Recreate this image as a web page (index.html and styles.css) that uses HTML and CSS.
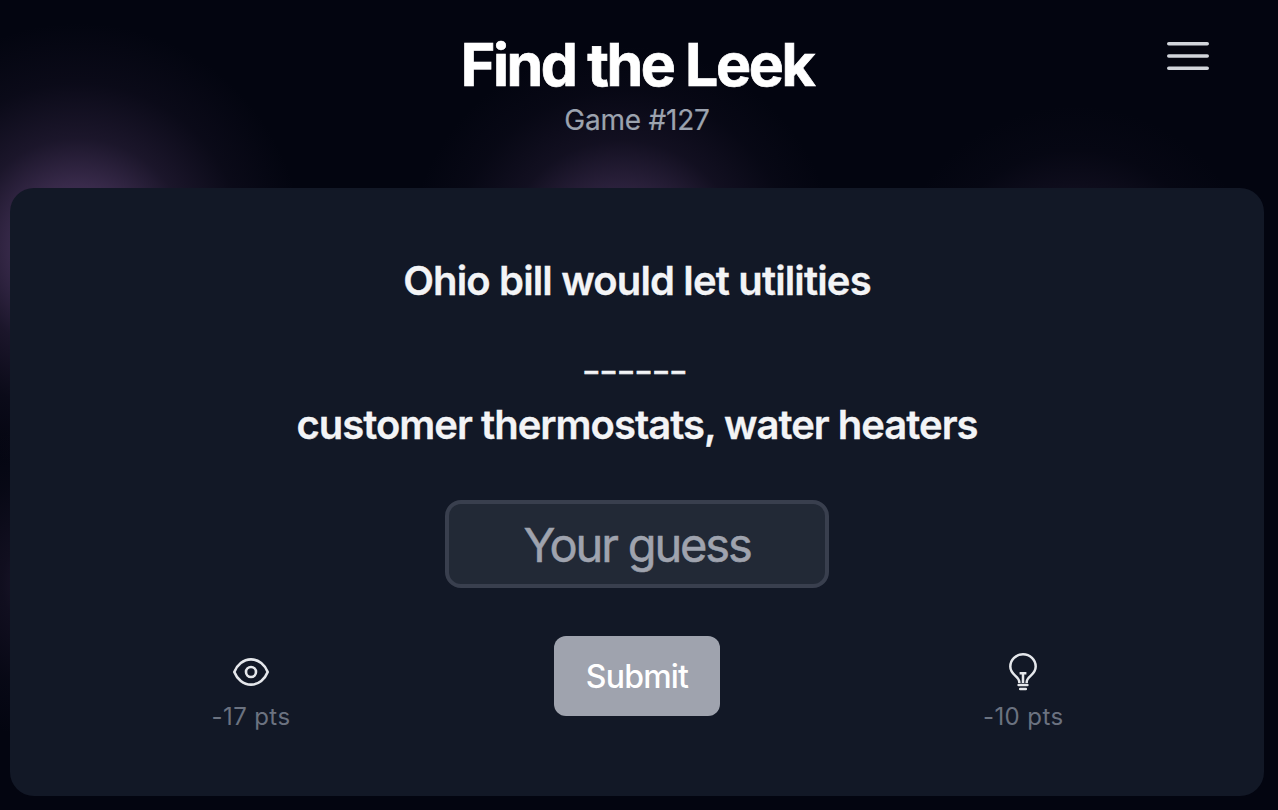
FILE: index.html
```
<!DOCTYPE html>
<html lang="en">
<head>
    <meta charset="UTF-8">
    <title>Find the Leek</title>
    <link rel="stylesheet" href="styles.css">
</head>
<body>
    <header class="header">
        <div class="title-area">
            <h1>Find the Leek</h1>
            <p class="game-number">Game #127</p>
        </div>
        <button class="menu-btn" aria-label="Menu">
            <svg viewBox="0 0 24 24" fill="none" stroke="currentColor" stroke-width="1.5" stroke-linecap="round">
                <path d="M3.75 6.75h16.5M3.75 12h16.5M3.75 17.25h16.5"/>
            </svg>
        </button>
    </header>
    <main class="card">
        <div class="headline">
            <p class="before">Ohio bill would let utilities</p>
            <p class="blank">______</p>
            <p>customer thermostats, water heaters</p>
        </div>
        <input class="guess-input" type="text" placeholder="Your guess">
        <div class="actions">
            <button class="hint-btn">
                <svg class="hint-icon" viewBox="0 0 48 48" fill="none" stroke="currentColor" stroke-width="2.6">
                    <path d="M7.3 24C10 17 16.300 11.400 24 11.400S38 17 40.700 24C38 31 31.700 36.600 24 36.600S10 31 7.300 24Z" stroke-linejoin="round"/>
                    <circle cx="24" cy="24" r="5"/>
                </svg>
                <span>-17 pts</span>
            </button>
            <button class="submit-btn">Submit</button>
            <button class="hint-btn">
                <svg class="hint-icon" viewBox="0 0 48 48" fill="none" stroke="currentColor" stroke-width="2.5">
                    <path d="M20.300 35V34C20.300 27.800 11.300 27.500 11.300 18.600a12.700 12.300 0 0 1 25.400 0C36.700 27.500 27.700 27.800 27.700 34V35"/>
                    <path d="M20.600 25.300h6.800M24 25v10"/>
                    <path d="M19.600 37h8.800M21.200 41h5.600" stroke-linecap="round"/>
                </svg>
                <span>-10 pts</span>
            </button>
        </div>
    </main>
</body>
</html>
```
FILE: styles.css
```
* {
    box-sizing: border-box;
}
html, body {
    height: 100%;
    margin: 0;
    overflow: hidden;
}
body {
    font-family: Inter, "Liberation Sans", sans-serif;
    color: #f3f4f6;
    background:
        radial-gradient(circle at 78px 248px, #50395f 0, rgba(78, 57, 98, 0.74) 60px, rgba(78, 57, 98, 0.32) 110px, rgba(78, 57, 98, 0.1) 165px, transparent 225px),
        radial-gradient(circle at 622px 260px, #50395f 0, rgba(78, 57, 98, 0.54) 72px, rgba(78, 57, 98, 0.2) 120px, rgba(78, 57, 98, 0.06) 170px, transparent 215px),
        radial-gradient(circle at 1075px 290px, rgba(78, 57, 98, 0.7) 0, rgba(78, 57, 98, 0.14) 105px, rgba(78, 57, 98, 0.04) 140px, transparent 185px),
        radial-gradient(circle at 60px 583px, rgba(78, 57, 98, 0.5) 0, rgba(78, 57, 98, 0.18) 58px, rgba(78, 57, 98, 0.06) 110px, transparent 160px),
        #030510;
}
p, h1 {
    margin: 0;
}
button {
    font-family: inherit;
    border: 0;
    padding: 0;
    background: none;
    cursor: pointer;
}
svg {
    display: block;
}
.header {
    display: grid;
    grid-template-columns: 1fr auto 1fr;
    height: 188px;
    padding: 28px 62px 0 58px;
}
.title-area {
    grid-column: 2;
    padding-top: 1px;
    text-align: center;
}
h1 {
    font-size: 59px;
    line-height: 72px;
    font-weight: 700;
    letter-spacing: -0.041em;
    color: #fff;
    -webkit-text-stroke: 0.7px #fff;
}
.game-number {
    font-size: 28px;
    line-height: 38px;
    letter-spacing: -0.2px;
    color: #9ca3af;
    -webkit-text-stroke: 0.2px #9ca3af;
}
.menu-btn {
    justify-self: end;
    align-self: start;
    color: #d1d5db;
}
.menu-btn svg {
    width: 56px;
    height: 56px;
}
.card {
    display: flex;
    flex-direction: column;
    align-items: center;
    height: 608px;
    margin: 0 14px 0 10px;
    padding-top: 57px;
    border-radius: 24px;
    background: #121826;
}
.headline {
    font-size: 40px;
    line-height: 72px;
    font-weight: 600;
    letter-spacing: -0.025em;
    text-align: center;
    -webkit-text-stroke: 0.3px #f3f4f6;
}
.before {
    letter-spacing: -0.0215em;
}
.blank {
    padding-top: 16px;
    font-size: 28px;
    line-height: 56px;
    letter-spacing: 4.3px;
    -webkit-text-stroke: 0.7px #f3f4f6;
}
.guess-input {
    width: 384px;
    height: 88px;
    margin-top: 39px;
    border: 4px solid #393f4e;
    border-radius: 16px;
    background: #222936;
    color: #f3f4f6;
    font-family: inherit;
    font-size: 47px;
    letter-spacing: -0.046em;
    text-align: center;
}
.guess-input::placeholder {
    color: #9fa3ae;
    -webkit-text-stroke: 0.5px #9fa3ae;
}
.actions {
    display: flex;
    justify-content: space-between;
    width: 852px;
    margin-top: 48px;
}
.hint-btn {
    width: 80px;
    padding-top: 12px;
    font-size: 24px;
    line-height: 32px;
    letter-spacing: 0.4px;
    color: #6b7280;
    white-space: nowrap;
}
.hint-icon {
    width: 48px;
    height: 48px;
    margin: 0 auto 5px;
    color: #e5e7eb;
}
.submit-btn {
    width: 166px;
    height: 80px;
    border-radius: 12px;
    background: #9fa3ae;
    color: #fff;
    font-size: 32px;
    font-weight: 500;
    letter-spacing: -0.8px;
}
```
